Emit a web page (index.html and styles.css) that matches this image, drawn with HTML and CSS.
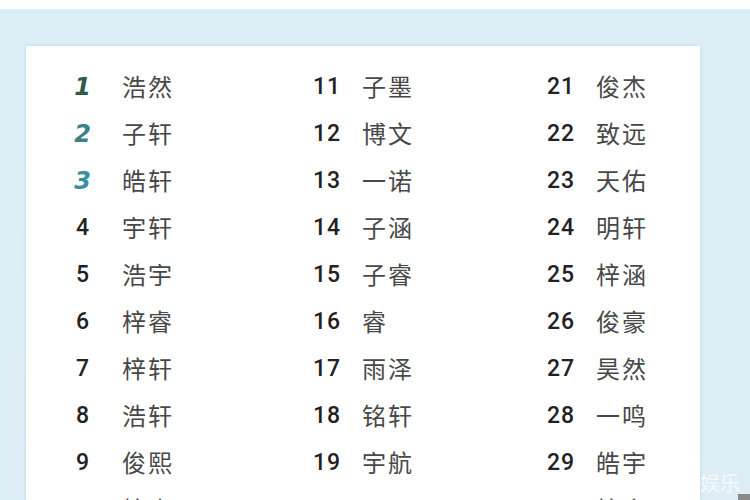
FILE: index.html
```html
<!DOCTYPE html>
<html lang="zh">
<head>
<meta charset="utf-8">
<link rel="stylesheet" href="styles.css">
</head>
<body>
<div class="page">
  <div class="card">
    <div class="grid">
      <div class="cell c1"><span class="num hand h1">1</span><span class="name">浩然</span></div>
      <div class="cell"><span class="num">11</span><span class="name">子墨</span></div>
      <div class="cell"><span class="num">21</span><span class="name">俊杰</span></div>

      <div class="cell c1"><span class="num hand h2">2</span><span class="name">子轩</span></div>
      <div class="cell"><span class="num">12</span><span class="name">博文</span></div>
      <div class="cell"><span class="num">22</span><span class="name">致远</span></div>

      <div class="cell c1"><span class="num hand h3">3</span><span class="name">皓轩</span></div>
      <div class="cell"><span class="num">13</span><span class="name">一诺</span></div>
      <div class="cell"><span class="num">23</span><span class="name">天佑</span></div>

      <div class="cell c1"><span class="num">4</span><span class="name">宇轩</span></div>
      <div class="cell"><span class="num">14</span><span class="name">子涵</span></div>
      <div class="cell"><span class="num">24</span><span class="name">明轩</span></div>

      <div class="cell c1"><span class="num">5</span><span class="name">浩宇</span></div>
      <div class="cell"><span class="num">15</span><span class="name">子睿</span></div>
      <div class="cell"><span class="num">25</span><span class="name">梓涵</span></div>

      <div class="cell c1"><span class="num">6</span><span class="name">梓睿</span></div>
      <div class="cell"><span class="num">16</span><span class="name">睿</span></div>
      <div class="cell"><span class="num">26</span><span class="name">俊豪</span></div>

      <div class="cell c1"><span class="num">7</span><span class="name">梓轩</span></div>
      <div class="cell"><span class="num">17</span><span class="name">雨泽</span></div>
      <div class="cell"><span class="num">27</span><span class="name">昊然</span></div>

      <div class="cell c1"><span class="num">8</span><span class="name">浩轩</span></div>
      <div class="cell"><span class="num">18</span><span class="name">铭轩</span></div>
      <div class="cell"><span class="num">28</span><span class="name">一鸣</span></div>

      <div class="cell c1"><span class="num">9</span><span class="name">俊熙</span></div>
      <div class="cell"><span class="num">19</span><span class="name">宇航</span></div>
      <div class="cell"><span class="num">29</span><span class="name">皓宇</span></div>

      <div class="cell c1"><span class="num">10</span><span class="name">梓豪</span></div>
      <div class="cell"><span class="num">20</span><span class="name">雨辰</span></div>
      <div class="cell"><span class="num">30</span><span class="name">梓宸</span></div>
    </div>
  </div>
  <div class="mark">娱乐</div>
  <div class="corner"></div>
</div>
</body>
</html>
```
FILE: styles.css
```css
html, body {
  margin: 0;
  padding: 0;
  background: #ffffff;
  overflow: hidden;
}
.page {
  position: relative;
  width: 750px;
  height: 500px;
  box-sizing: border-box;
  padding-top: 9px;
  background: linear-gradient(#ffffff 0, #ffffff 9px, #dbeef5 9px, #dcedf6 100%);
}
.card {
  margin: 37px 50px 0 26px;
  height: 460px;
  background: #ffffff;
  box-shadow: 0 0 3px rgba(160, 190, 205, 0.5);
  padding: 16px 0 0 34px;
  box-sizing: border-box;
  overflow: hidden;
}
.grid {
  display: grid;
  grid-template-columns: 253px 234px 1fr;
  grid-auto-rows: 47px;
}
.cell {
  display: flex;
  align-items: center;
}
.num {
  width: 49px;
  flex: none;
  font-family: Roboto, "Liberation Sans", Arial, sans-serif;
  font-size: 23px;
  font-weight: 500;
  color: #222222;
  letter-spacing: 1px;
  position: relative;
  top: 1px;
}
.c1 .num {
  width: 46px;
  margin-right: 16px;
  text-align: center;
}
.hand {
  font-style: italic;
  font-family: "DejaVu Sans", sans-serif;
  font-weight: bold;
  font-size: 24px;
}
.h1 { color: #2c5a4c; }
.h2 { color: #3a8288; }
.h3 { color: #3a8ea4; }
.name {
  font-family: "Noto Sans CJK SC", "Noto Sans", sans-serif;
  font-size: 24px;
  letter-spacing: 2px;
  color: #484848;
}
.mark {
  position: absolute;
  left: 700px;
  top: 468px;
  font-family: "Noto Sans CJK SC", sans-serif;
  font-size: 20px;
  color: rgba(255, 255, 255, 0.75);
}
.corner {
  position: absolute;
  right: 0;
  bottom: 0;
  width: 12px;
  height: 6px;
  background: #8a8a8a;
}
```
